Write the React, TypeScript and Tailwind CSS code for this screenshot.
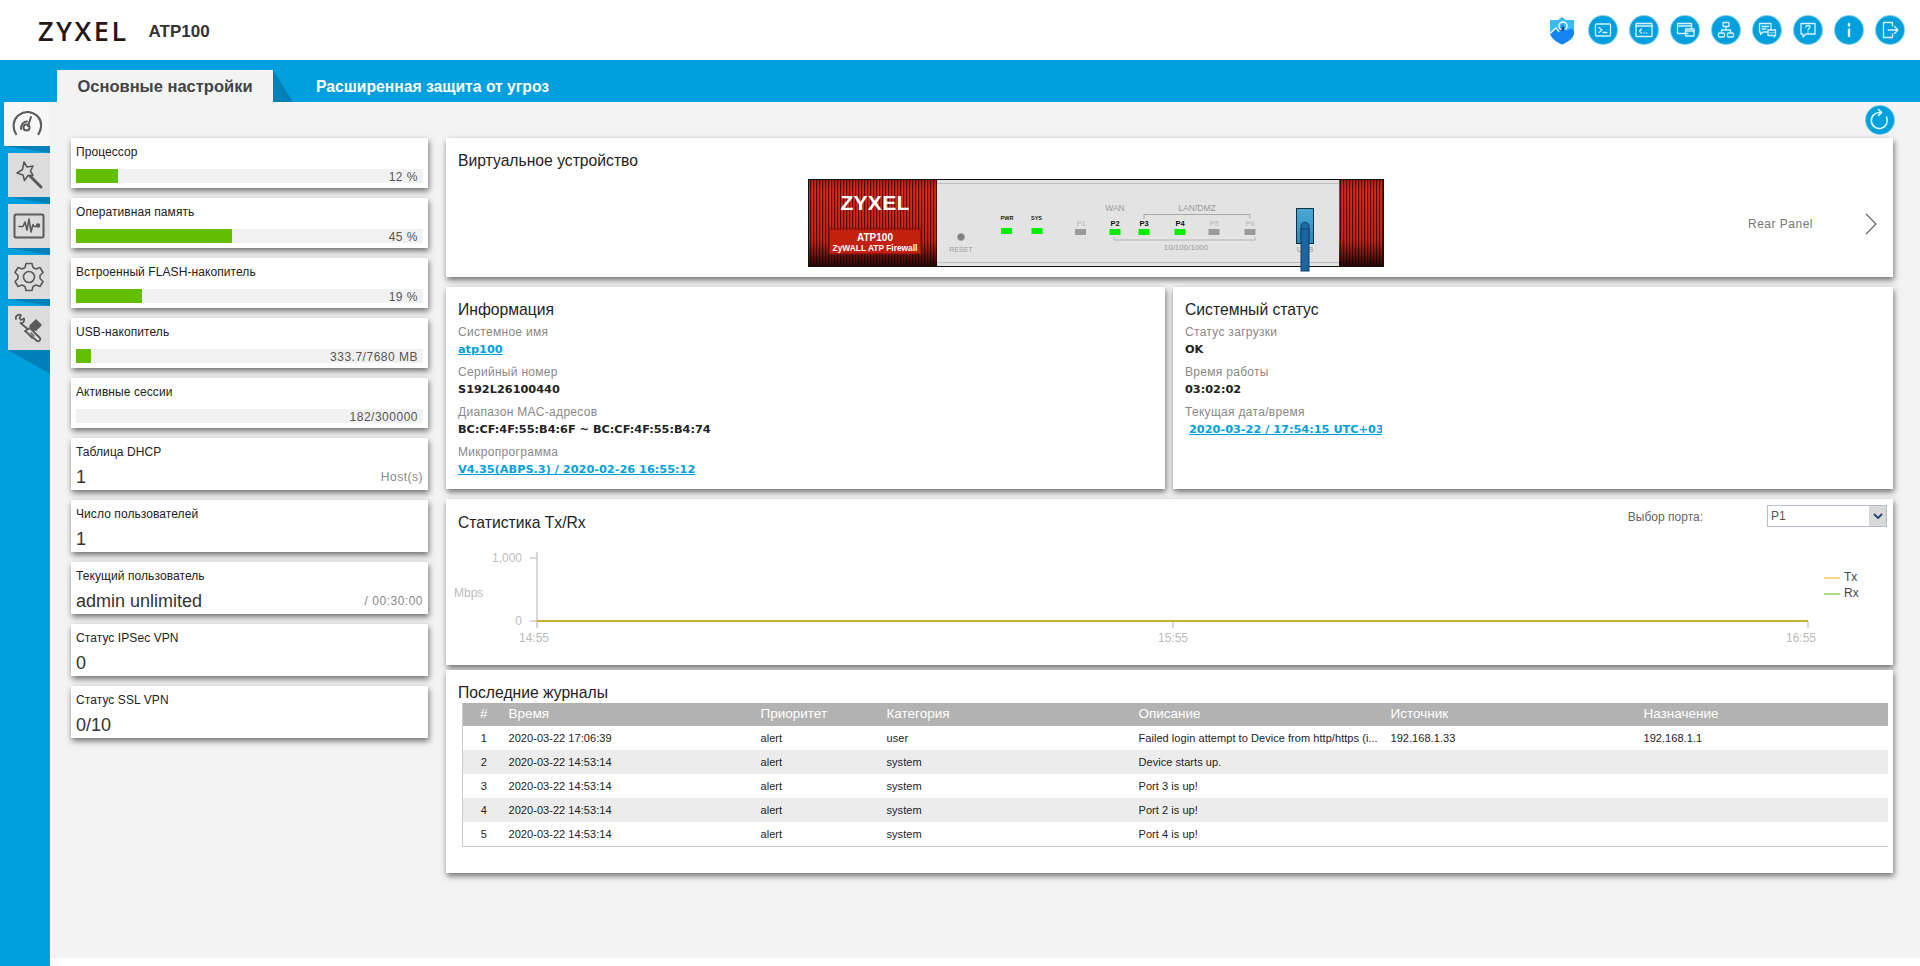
import type { ReactNode } from 'react';

const usage = [
  { title: 'Процессор', value: '12 %', pct: 12.1 },
  { title: 'Оперативная память', value: '45 %', pct: 45 },
  { title: 'Встроенный FLASH-накопитель', value: '19 %', pct: 19 },
  { title: 'USB-накопитель', value: '333.7/7680 MB', pct: 4.3 },
  { title: 'Активные сессии', value: '182/300000', pct: 0 },
];

const counters = [
  { title: 'Таблица DHCP', value: '1', note: 'Host(s)' },
  { title: 'Число пользователей', value: '1', note: '' },
  { title: 'Текущий пользователь', value: 'admin unlimited', note: '/ 00:30:00' },
  { title: 'Статус IPSec VPN', value: '0', note: '' },
  { title: 'Статус SSL VPN', value: '0/10', note: '' },
];

const logs = [
  ['1', '2020-03-22 17:06:39', 'alert', 'user', 'Failed login attempt to Device from http/https (i...', '192.168.1.33', '192.168.1.1'],
  ['2', '2020-03-22 14:53:14', 'alert', 'system', 'Device starts up.', '', ''],
  ['3', '2020-03-22 14:53:14', 'alert', 'system', 'Port 3 is up!', '', ''],
  ['4', '2020-03-22 14:53:14', 'alert', 'system', 'Port 2 is up!', '', ''],
  ['5', '2020-03-22 14:53:14', 'alert', 'system', 'Port 4 is up!', '', ''],
];

const cardClass = 'bg-white shadow-[1px_3px_6px_rgba(0,0,0,0.55)]';

function RoundIcon({ children }: { children: ReactNode }) {
  return (
    <div className="flex h-[28px] w-[28px] items-center justify-center rounded-full bg-[#00a0df] ring-1 ring-[#7fd0f0]">
      <svg viewBox="0 0 24 24" className="h-[24px] w-[24px]" fill="none" stroke="#d9f2ff" strokeWidth="1.3" strokeLinecap="round" strokeLinejoin="round">
        {children}
      </svg>
    </div>
  );
}

function HeaderIcons() {
  return (
    <div className="flex items-center gap-[13px]">
      <svg viewBox="0 0 26 29" className="mr-[1px] h-[29px] w-[26px]">
        <path d="M1 4 L9 4 L13 1 L17 4 L25 4 L25 16 C25 22 19 26 13 28.5 C7 26 1 22 1 16 Z" fill="#3cbcf5" />
        <path d="M1.5 18 L7 12 L10 16 L13 8 L18 15 L22 12 L25 15 L25 17 C25 22 19 26 13 28.5 C8 26 3 23 1.5 18 Z" fill="#1485f0" />
        <path d="M1.5 17 L7 12 L10 16" fill="none" stroke="#ffffff" strokeWidth="1.2" />
        <circle cx="14" cy="10" r="4" fill="none" stroke="#ffffff" strokeWidth="1.4" />
        <path d="M12 15 L14 9 L16 15 Z" fill="#0d4fb0" />
      </svg>
      <RoundIcon>
        <rect x="4.5" y="6" width="15" height="12" rx="1" />
        <path d="M8 9.5 L11 12 L8 14.5 M12 14.5 H16" />
      </RoundIcon>
      <RoundIcon>
        <rect x="4" y="5.5" width="16" height="13" rx="0.5" />
        <path d="M4 8 H20 M9.5 11 L7.5 13 L9.5 15 M12 15 H12.2 M14.5 15 H14.7" />
      </RoundIcon>
      <RoundIcon>
        <path d="M15 15.5 H4.5 V5.5 H18.5 V11" />
        <path d="M4.5 8 H18.5" />
        <rect x="12.5" y="11" width="8.5" height="7" />
        <path d="M12.5 13 H21" />
      </RoundIcon>
      <RoundIcon>
        <rect x="9" y="4.5" width="6" height="4" rx="0.5" />
        <rect x="4.5" y="15" width="6" height="4" rx="1" />
        <rect x="13.5" y="15" width="6" height="4" rx="1" />
        <path d="M12 8.5 V12 M7.5 15 V12 H16.5 V15" />
      </RoundIcon>
      <RoundIcon>
        <path d="M4.5 5.5 H16 V14 H8 L5.5 16.5 V14 H4.5 Z" />
        <path d="M7 8.5 H13.5 M7 11 H11" />
        <path d="M13 12 H20.5 V17.5 H19.5 V19 L18 17.5 H13 Z" fill="#00a0df" />
        <path d="M15 14.8 H15.2 M16.8 14.8 H17 M18.6 14.8 H18.8" />
      </RoundIcon>
      <RoundIcon>
        <path d="M5 5.5 H19 V16 H10 L7 19 V16 H5 Z" />
        <path d="M10 9 C10 7 14 7 14 9 C14 10.5 12 10.5 12 12 M12 14 V14.2" />
      </RoundIcon>
      <RoundIcon>
        <path d="M12 6 V7.5" strokeWidth="2.4" />
        <path d="M12 10.5 V19" strokeWidth="2.4" strokeLinecap="butt" />
      </RoundIcon>
      <RoundIcon>
        <path d="M14.5 8 V4.5 H5.5 V19.5 H14.5 V16" />
        <path d="M10 12 H20 M16.5 8.5 L20 12 L16.5 15.5" />
      </RoundIcon>
    </div>
  );
}

function SideIcon({ children }: { children: ReactNode }) {
  return (
    <svg viewBox="0 0 32 32" className="h-[32px] w-[32px]" fill="none" stroke="#5a5a5a" strokeWidth="1.6" strokeLinecap="round" strokeLinejoin="round">
      {children}
    </svg>
  );
}

function SideTab({ active, last, children }: { active?: boolean; last?: boolean; children: ReactNode }) {
  return (
    <>
      <div className={active ? 'flex h-[44px] w-[46px] items-center justify-center bg-[#f7f7f7]' : 'flex h-[44px] w-[42px] items-center justify-center bg-[#dcdcdc]'}>
        {children}
      </div>
      <div className={last ? 'h-[24px] w-[42px] bg-[#0080b8] [clip-path:polygon(0_0,100%_0,100%_100%)]' : active ? 'h-[7px] w-[46px] bg-[#0080b8] [clip-path:polygon(0_0,100%_0,100%_100%)]' : 'h-[7px] w-[42px] bg-[#0080b8] [clip-path:polygon(0_0,100%_0,100%_100%)]'} />
    </>
  );
}

function Sidebar() {
  return (
    <div className="flex w-[50px] shrink-0 flex-col items-end bg-[#00a0df]">
      <SideTab active>
        <SideIcon>
          <path d="M5 26 C1 20 2 11 8 7 C13 3 20 3 25 7 C31 11 31.500 20 27.500 26" strokeWidth="2.200" strokeDasharray="9 1.5" />
          <circle cx="15.500" cy="19.500" r="3" strokeWidth="2" />
          <path d="M10 21 C10 16 13 13.500 16 13.500 M17 18 L20 9" strokeWidth="2" />
        </SideIcon>
      </SideTab>
      <SideTab>
        <SideIcon>
          <path d="M11 3 L14 8 L20 7 L17.500 12 L20 16.500 L15 16.500 L11.500 21.500 L10 16 L4 14 L9.500 10.500 Z" />
          <path d="M17 17 L28 28" strokeWidth="3" />
        </SideIcon>
      </SideTab>
      <SideTab>
        <SideIcon>
          <rect x="1.500" y="4.500" width="29" height="23" rx="1.500" strokeWidth="2" />
          <path d="M6 16.500 H10 L12 12 L14 20 L16 9 L18 22 L20 14.500 L21 16.500 H23" />
          <circle cx="25" cy="15.500" r="1.500" fill="#5a5a5a" />
        </SideIcon>
      </SideTab>
      <SideTab>
        <SideIcon>
          <path d="M13 2.500 H19 L20 6.500 L23 8 L27 6.500 L30 11.500 L27 14.500 V17.500 L30 20.500 L27 25.500 L23 24 L20 25.500 L19 29.500 H13 L12 25.500 L9 24 L5 25.500 L2 20.500 L5 17.500 V14.500 L2 11.500 L5 6.500 L9 8 L12 6.500 Z" />
          <circle cx="16" cy="16" r="5.500" />
        </SideIcon>
      </SideTab>
      <SideTab last>
        <SideIcon>
          <path d="M3 7 C2 4 5 2 8 3 L6.500 6 L8 8 L11 6.500 C12 9 10 11.500 7.500 11 L14 16.500" strokeWidth="1.800" />
          <path d="M17 14 L23 8 L28 13 L23 18 L20 18 Z" fill="#5a5a5a" />
          <path d="M12 19 L17 16 L27 26 C28 28 26 30 24 29 Z" strokeWidth="1.800" />
          <path d="M18 21 L21 24 M16 23 L19 26" strokeWidth="1.400" />
        </SideIcon>
      </SideTab>
    </div>
  );
}

function UsageCard({ title, value, pct }: { title: string; value: string; pct: number }) {
  return (
    <div className={`${cardClass} flex h-[50px] flex-col justify-between px-[5px] pt-[7px] pb-[5px]`}>
      <div className="text-[12px] leading-[15px] tracking-[0.08px] text-[#222]">{title}</div>
      <div className="relative h-[14px] bg-[#f1f1f1]">
        <div className="h-full bg-[#63bd00]" style={{ width: `${pct}%` }} />
        <div className="absolute top-0 right-[5px] text-[12px] leading-[16px] tracking-[0.5px] text-[#555]">{value}</div>
      </div>
    </div>
  );
}

function CounterCard({ title, value, note }: { title: string; value: string; note: string }) {
  return (
    <div className={`${cardClass} flex h-[52px] flex-col justify-between px-[5px] pt-[7px] pb-[1px]`}>
      <div className="text-[12px] leading-[15px] tracking-[0.08px] text-[#222]">{title}</div>
      <div className="flex items-center justify-between">
        <span className="text-[18px] leading-[24px] text-[#333]">{value}</span>
        <span className="text-[12px] tracking-[0.5px] text-[#888]">{note}</span>
      </div>
    </div>
  );
}

function Field({ label, value, link, clip }: { label: string; value: string; link?: boolean; clip?: boolean }) {
  const valueFont = "font-['DejaVu_Sans',sans-serif] text-[11.300px] leading-[16px] font-bold";
  return (
    <div className="h-[40px]">
      <div className="text-[12px] leading-[16px] tracking-[0.3px] text-[#888]">{label}</div>
      <div className={clip ? 'ml-[4px] h-[16px] w-[193px] overflow-hidden whitespace-nowrap leading-[16px]' : 'h-[16px] leading-[16px]'}>
        <span className={link ? `${valueFont} text-[#00a0df] underline` : `${valueFont} text-[#222]`}>{value}</span>
      </div>
    </div>
  );
}

function DeviceFront() {
  return (
    <svg viewBox="0 0 576 98" className="h-[98px] w-[576px]" fontFamily="Liberation Sans, Arial, sans-serif">
      <defs>
        <linearGradient id="shade" x1="0" x2="0" y1="0" y2="1">
          <stop offset="0" stopColor="#000000" stopOpacity="0.2" />
          <stop offset="0.12" stopColor="#000000" stopOpacity="0" />
          <stop offset="0.7" stopColor="#000000" stopOpacity="0.1" />
          <stop offset="1" stopColor="#000000" stopOpacity="0.8" />
        </linearGradient>
        <linearGradient id="plug" x1="0" x2="0" y1="0" y2="1">
          <stop offset="0" stopColor="#4aa8d4" />
          <stop offset="1" stopColor="#2b88c0" />
        </linearGradient>
      </defs>
      <rect x="0" y="0" width="576" height="88" fill="#111111" />
      <rect x="1" y="1" width="128" height="86" fill="#dc2a1c" />
      <rect x="531" y="1" width="44" height="86" fill="#dc2a1c" />
      {Array.from({ length: 43 }, (_, i) => (
        <rect key={i} x={2 + i * 3} y="1" width="1.200" height="86" fill="#5a0b08" />
      ))}
      {Array.from({ length: 15 }, (_, i) => (
        <rect key={i} x={532 + i * 3} y="1" width="1.200" height="86" fill="#5a0b08" />
      ))}
      <rect x="1" y="1" width="128" height="86" fill="url(#shade)" />
      <rect x="531" y="1" width="44" height="86" fill="url(#shade)" />
      <rect x="129" y="1" width="402" height="86" fill="#e3e3e3" />
      <path d="M129 4.500 H531 M129 83.500 H531" stroke="#bdbdbd" strokeWidth="1" />
      <text x="67" y="31" textAnchor="middle" fontSize="21" fontWeight="700" fill="#ffffff" letterSpacing="0.3">ZYXEL</text>
      <rect x="21" y="50" width="92" height="25" fill="#c4200f" stroke="#7a0f08" strokeWidth="1" />
      <text x="67" y="61.500" textAnchor="middle" fontSize="10" fontWeight="700" fill="#ffffff">ATP100</text>
      <text x="67" y="72" textAnchor="middle" fontSize="8.400" fontWeight="700" fill="#ffffff">ZyWALL ATP Firewall</text>
      <circle cx="153" cy="58" r="3.500" fill="#7d7d7d" stroke="#a5a5a5" />
      <text x="153" y="73" textAnchor="middle" fontSize="7" fill="#999999">RESET</text>
      <text x="199" y="41" textAnchor="middle" fontSize="5.500" fontWeight="700" fill="#222222">PWR</text>
      <text x="228.500" y="41" textAnchor="middle" fontSize="5.500" fontWeight="700" fill="#222222">SYS</text>
      <rect x="193" y="49" width="11" height="6" fill="#00ee00" />
      <rect x="223.500" y="49" width="11" height="6" fill="#00ee00" />
      <text x="307" y="32" textAnchor="middle" fontSize="8.500" fill="#999999">WAN</text>
      <text x="389" y="32" textAnchor="middle" fontSize="8.500" fill="#999999">LAN/DMZ</text>
      <path d="M336 40 V35.500 H442 V40" fill="none" stroke="#999999" strokeWidth="0.800" />
      <path d="M306 58 V61 H447 V58" fill="none" stroke="#a5a5a5" strokeWidth="0.800" />
      <text x="378" y="71" textAnchor="middle" fontSize="8" fill="#999999">10/100/1000</text>
      <text x="273" y="47" textAnchor="middle" fontSize="7.500" fontWeight="700" fill="#c4c4c4">P1</text>
      <text x="307" y="47" textAnchor="middle" fontSize="7.500" fontWeight="700" fill="#111111">P2</text>
      <text x="336" y="47" textAnchor="middle" fontSize="7.500" fontWeight="700" fill="#111111">P3</text>
      <text x="372" y="47" textAnchor="middle" fontSize="7.500" fontWeight="700" fill="#111111">P4</text>
      <text x="406" y="47" textAnchor="middle" fontSize="7.500" fontWeight="700" fill="#c4c4c4">P5</text>
      <text x="442" y="47" textAnchor="middle" fontSize="7.500" fontWeight="700" fill="#c4c4c4">P6</text>
      <rect x="267" y="50" width="11" height="6" fill="#9a9a9a" />
      <rect x="301.500" y="50" width="11" height="6" fill="#00ee00" />
      <rect x="330.500" y="50" width="11" height="6" fill="#00ee00" />
      <rect x="366.500" y="50" width="11" height="6" fill="#00ee00" />
      <rect x="400.500" y="50" width="11" height="6" fill="#9a9a9a" />
      <rect x="436.500" y="50" width="11" height="6" fill="#9a9a9a" />
      <text x="497" y="73" textAnchor="middle" fontSize="8" fill="#999999">USB</text>
      <rect x="488.500" y="29.500" width="17" height="35" fill="url(#plug)" stroke="#12303f" strokeWidth="1" />
      <path d="M493 60 V47 C493 42 501 42 501 47 V60 Z" fill="#1b6aa5" stroke="#123f66" strokeWidth="1" />
      <rect x="493" y="50" width="8" height="42" fill="#1b66a0" stroke="#123f66" strokeWidth="1" />
    </svg>
  );
}

function TrafficChart() {
  return (
    <svg viewBox="0 0 1447 100" className="h-[100px] w-[1447px]" fontFamily="Liberation Sans, Arial, sans-serif" fontSize="12">
      <path d="M91 4 V80 M84 10 H91 M84 73 H91 M727 73 V80 M1362 73 V80" stroke="#b0b0b0" strokeWidth="1" fill="none" />
      <path d="M91 73 H1362" stroke="#c9b02f" strokeWidth="2" />
      <text x="76" y="14" textAnchor="end" fill="#bbbbbb">1,000</text>
      <text x="76" y="77" textAnchor="end" fill="#bbbbbb">0</text>
      <text x="8" y="49" fill="#bbbbbb">Mbps</text>
      <text x="88" y="94" textAnchor="middle" fill="#bbbbbb">14:55</text>
      <text x="727" y="94" textAnchor="middle" fill="#bbbbbb">15:55</text>
      <text x="1355" y="94" textAnchor="middle" fill="#bbbbbb">16:55</text>
      <path d="M1378 30 H1394" stroke="#f5a500" strokeWidth="1" />
      <path d="M1378 46 H1394" stroke="#5cb800" strokeWidth="1" />
      <text x="1398" y="33" fill="#444444">Tx</text>
      <text x="1398" y="49" fill="#444444">Rx</text>
    </svg>
  );
}

function LogTable() {
  const heads = ['#', 'Время', 'Приоритет', 'Категория', 'Описание', 'Источник', 'Назначение'];
  const widths = ['w-[42px]', 'w-[252px]', 'w-[126px]', 'w-[252px]', 'w-[252px]', 'w-[253px]', 'w-[248px]'];
  return (
    <table className="ml-[16px] w-[1425px] table-fixed border-b border-l border-[#cccccc] text-left">
      <thead>
        <tr className="h-[23px] bg-[#b2b2b2] text-[13.500px] text-white">
          {heads.map((h, i) => (
            <th key={h} className={`${widths[i]} font-normal ${i === 0 ? 'text-center' : 'pl-[4px]'}`}>
              {h}
            </th>
          ))}
        </tr>
      </thead>
      <tbody>
        {logs.map((row, r) => (
          <tr key={row[0]} className={r % 2 === 1 ? 'h-[24px] bg-[#ececec] text-[11px] tracking-[0.05px] text-[#222]' : 'h-[24px] bg-white text-[11px] tracking-[0.05px] text-[#222]'}>
            {row.map((cell, i) => (
              <td key={i} className={i === 0 ? 'pt-[1px] text-center' : 'pt-[1px] pl-[4px] whitespace-nowrap'}>
                {cell}
              </td>
            ))}
          </tr>
        ))}
      </tbody>
    </table>
  );
}

export default function App() {
  return (
    <div className="flex h-[966px] w-[1920px] flex-col overflow-hidden bg-white font-['Liberation_Sans',Arial,sans-serif]">
      <header className="flex h-[60px] shrink-0 items-center justify-between pr-[16px] pl-[38px]">
        <div className="flex items-center">
          <span className="font-['Open_Sans',sans-serif] text-[27px] leading-none font-semibold tracking-[2.5px] text-[#231815]">ZYXEL</span>
          <span className="mt-[4px] ml-[20px] text-[17px] font-bold text-[#333]">ATP100</span>
        </div>
        <HeaderIcons />
      </header>

      <div className="flex h-[42px] shrink-0 items-end bg-[#00a0df] pl-[57px]">
        <div className="flex h-[32px] w-[216px] items-center justify-center bg-[#f3f3f3] text-[16.500px] font-bold text-[#444]">Основные настройки</div>
        <div className="h-[32px] w-[20px] bg-[#0080b8] [clip-path:polygon(0_0,100%_100%,0_100%)]" />
        <div className="ml-[23px] flex h-[32px] items-center pt-[2px] text-[15.700px] font-bold text-white">Расширенная защита от угроз</div>
      </div>

      <div className="flex min-h-0 flex-1">
        <Sidebar />
        <main className="h-[856px] flex-1 bg-[#f3f3f3] pl-[21px]">
          <div className="flex h-[36px] items-center justify-end pr-[26px]">
            <div className="flex h-[28px] w-[28px] items-center justify-center rounded-full bg-[#00a0df] ring-1 ring-[#7fd0f0]">
              <svg viewBox="0 0 24 24" className="h-[24px] w-[24px]" fill="none" stroke="#e4f6ff" strokeWidth="1.600" strokeLinecap="round">
                <path d="M18.500 9 A8 8 0 1 1 12 4.500" />
                <path d="M10.500 1.500 L13.500 4.500 L10.500 7.500" />
              </svg>
            </div>
          </div>

          <div className="flex gap-[18px]">
            <div className="flex w-[357px] shrink-0 flex-col gap-[10px]">
              {usage.map((u) => (
                <UsageCard key={u.title} {...u} />
              ))}
              {counters.map((c) => (
                <CounterCard key={c.title} {...c} />
              ))}
            </div>

            <div className="flex w-[1447px] shrink-0 flex-col">
              <section className={`${cardClass} relative h-[139px] px-[12px] pt-[13px]`}>
                <h2 className="text-[15.700px] leading-[20px] font-normal text-[#222]">Виртуальное устройство</h2>
                <div className="mt-[8px] ml-[350px] flex items-start">
                  <DeviceFront />
                  <span className="mt-[36px] ml-[364px] text-[12px] tracking-[0.5px] text-[#777]">Rear Panel</span>
                  <svg viewBox="0 0 14 24" className="mt-[33px] ml-[51px] h-[24px] w-[14px]" fill="none" stroke="#666666" strokeWidth="1.300">
                    <path d="M2 2 L12 12 L2 22" />
                  </svg>
                </div>
              </section>

              <div className="mt-[10px] flex h-[202px] gap-[8px]">
                <section className={`${cardClass} w-[719px] px-[12px] pt-[13px]`}>
                  <h2 className="mb-[4px] text-[15.700px] leading-[20px] font-normal text-[#222]">Информация</h2>
                  <Field label="Системное имя" value="atp100" link />
                  <Field label="Серийный номер" value="S192L26100440" />
                  <Field label="Диапазон MAC-адресов" value="BC:CF:4F:55:B4:6F ~ BC:CF:4F:55:B4:74" />
                  <Field label="Микропрограмма" value="V4.35(ABPS.3) / 2020-02-26 16:55:12" link />
                </section>
                <section className={`${cardClass} flex-1 px-[12px] pt-[13px]`}>
                  <h2 className="mb-[4px] text-[15.700px] leading-[20px] font-normal text-[#222]">Системный статус</h2>
                  <Field label="Статус загрузки" value="OK" />
                  <Field label="Время работы" value="03:02:02" />
                  <Field label="Текущая дата/время" value="2020-03-22 / 17:54:15 UTC+03" link clip />
                </section>
              </div>

              <section className={`${cardClass} mt-[10px] h-[166px]`}>
                <div className="flex h-[49px] items-start justify-between pt-[6px] pr-[6px] pl-[12px]">
                  <h2 className="mt-[8px] text-[15.700px] leading-[20px] font-normal text-[#222]">Статистика Tx/Rx</h2>
                  <div className="flex items-center">
                    <span className="pt-[2px] text-[12px] text-[#666]">Выбор порта:</span>
                    <div className="ml-[64px] flex h-[22px] w-[120px] items-center border border-[#b5bcd0] bg-white">
                      <span className="flex-1 pl-[3px] text-[12px] text-[#555]">P1</span>
                      <div className="flex h-full w-[17px] items-center justify-center bg-[#d9d9d9]">
                        <svg viewBox="0 0 10 6" className="h-[6px] w-[10px]" fill="none" stroke="#2b4a80" strokeWidth="2">
                          <path d="M1 1 L5 5 L9 1" />
                        </svg>
                      </div>
                    </div>
                  </div>
                </div>
                <TrafficChart />
              </section>

              <section className={`${cardClass} mt-[5px] h-[203px] pt-[14px]`}>
                <h2 className="mb-[1px] pl-[12px] text-[15.700px] leading-[18px] font-normal text-[#222]">Последние журналы</h2>
                <LogTable />
              </section>
            </div>
          </div>
        </main>
      </div>
    </div>
  );
}
